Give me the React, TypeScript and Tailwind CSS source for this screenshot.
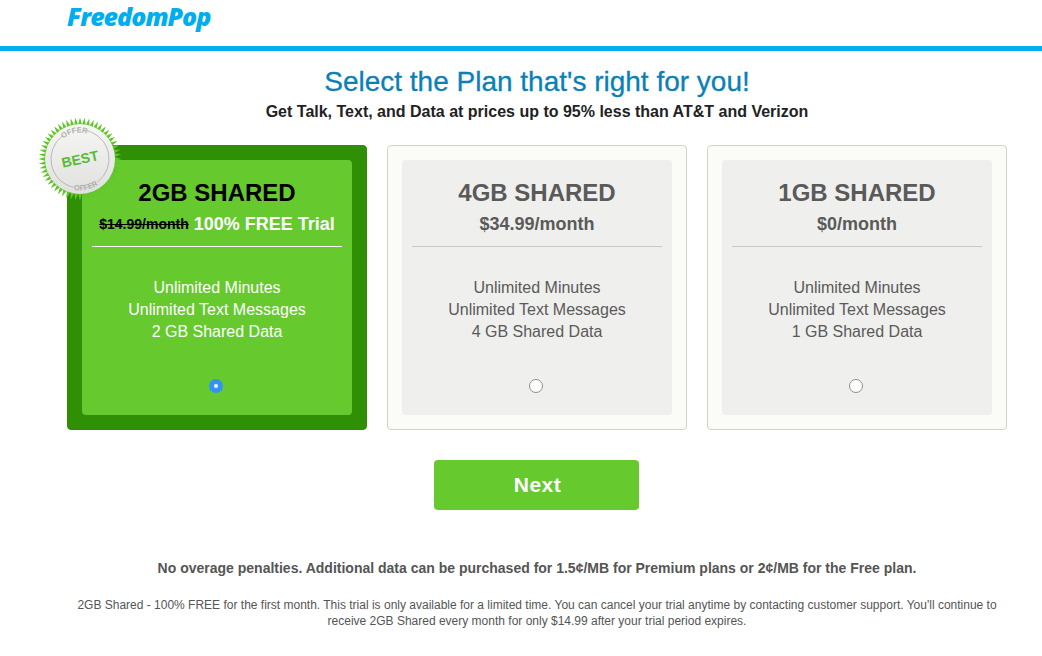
const plans = [
  {
    id: "2gb",
    name: "2GB SHARED",
    price: "$14.99/month",
    trial: "100% FREE Trial",
    data: "2 GB Shared Data",
    selected: true,
  },
  { id: "4gb", name: "4GB SHARED", price: "$34.99/month", data: "4 GB Shared Data" },
  { id: "1gb", name: "1GB SHARED", price: "$0/month", data: "1 GB Shared Data" },
];

function starburst() {
  const pts: string[] = [];
  const n = 56;
  for (let i = 0; i < n * 2; i++) {
    const r = i % 2 === 0 ? 41.5 : 34.5;
    const a = (Math.PI * i) / n;
    pts.push(`${(45 + r * Math.cos(a)).toFixed(2)},${(45 + r * Math.sin(a)).toFixed(2)}`);
  }
  return pts.join(" ");
}

function BestBadge() {
  return (
    <svg
      width="90"
      height="90"
      viewBox="0 0 90 90"
      className="absolute left-[-33.5px] top-[-32px]"
      style={{ fontFamily: "'Liberation Sans', Arial, sans-serif" }}
    >
      <defs>
        <linearGradient id="disc" x1="0" y1="0" x2="0" y2="1">
          <stop offset="0" stopColor="#f6f6f4" />
          <stop offset="1" stopColor="#e0e0de" />
        </linearGradient>
        <path id="arc-top" d="M 27.97 24.7 A 26.5 26.5 0 0 1 62.03 24.7" fill="none" />
        <path id="arc-bottom" d="M 24.75 69.13 A 31.5 31.5 0 0 0 65.25 69.13" fill="none" />
      </defs>
      <polygon points={starburst()} fill="#62c52c" />
      <circle cx="45" cy="45" r="35" fill="url(#disc)" />
      <g transform="rotate(-12 45 45)">
        <path d="M 32.74 18.7 A 29 29 0 0 0 32.74 71.3" fill="none" stroke="#a9a9a7" strokeWidth="0.7" />
        <path d="M 57.26 18.7 A 29 29 0 0 1 57.26 71.3" fill="none" stroke="#a9a9a7" strokeWidth="0.7" />
        <text fill="#aeaeac" fontSize="7.5" fontWeight="700">
          <textPath href="#arc-top" startOffset="50%" textAnchor="middle">
            OFFER
          </textPath>
        </text>
        <text fill="#aeaeac" fontSize="7.5" fontWeight="700">
          <textPath href="#arc-bottom" startOffset="50%" textAnchor="middle">
            OFFER
          </textPath>
        </text>
        <text x="45" y="50" textAnchor="middle" fill="#58bb33" fontSize="14" fontWeight="700">
          BEST
        </text>
      </g>
    </svg>
  );
}

function Radio({ checked }: { checked?: boolean }) {
  if (checked) {
    return (
      <span className="flex h-[14px] w-[14px] items-center justify-center rounded-full bg-[#3393f5]">
        <span className="h-[4px] w-[4px] rounded-full bg-white" />
      </span>
    );
  }
  return <span className="block h-[14px] w-[14px] rounded-full border border-[#8e8e8e] bg-white" />;
}

function PlanCard({ plan }: { plan: (typeof plans)[number] }) {
  const on = plan.selected;
  return (
    <div
      className={`relative h-[285px] w-[300px] rounded-[4px] border p-[14px] ${
        on ? "border-[#2d8e04] bg-[#2f8f05]" : "border-[#d2d2cc] bg-[#fbfbf7]"
      }`}
    >
      {on && <BestBadge />}
      <div
        className={`flex h-[255px] flex-col items-center rounded-[4px] px-[10px] pt-[19px] ${
          on ? "bg-[#66c92e] text-white" : "bg-[#efefed] text-[#5a5a5a]"
        }`}
      >
        <h2 className={`text-[24px] font-bold leading-[28px] ${on ? "text-black" : ""}`}>{plan.name}</h2>
        <p className="mt-[4px] flex h-[26px] items-center whitespace-nowrap text-[18px] font-bold leading-[26px]">
          <span className={on ? "text-[14px] text-black line-through" : ""}>{plan.price}</span>
          {plan.trial && <span className="ml-[5px] text-[18px] text-white">{plan.trial}</span>}
        </p>
        <div className={`mt-[9px] h-px w-full ${on ? "bg-white" : "bg-[#c9c9c7]"}`} />
        <div className="mt-[30px] text-center text-[16px] leading-[22px]">
          <p>Unlimited Minutes</p>
          <p>Unlimited Text Messages</p>
          <p>{plan.data}</p>
        </div>
        <div className="mr-[2px] mt-[36px]">
          <Radio checked={on} />
        </div>
      </div>
    </div>
  );
}

export default function App() {
  return (
    <div className="h-[656px] w-[1042px] overflow-hidden bg-white font-['Liberation_Sans',Arial,sans-serif]">
      <header className="h-[51px] border-b-[5px] border-[#00aeef] pl-[67px]">
        <span className="block font-['Open_Sans',sans-serif] text-[25px] font-extrabold italic leading-[32px] tracking-[-1px] text-[#00aeef]">
          FreedomPop
        </span>
      </header>

      <main className="ml-[67px] w-[940px]">
        <h1 className="mt-[13px] text-center text-[28px] leading-[36px] text-[#0b7fb8] [-webkit-text-stroke:0.3px_#0b7fb8]">
          Select the Plan that's right for you!
        </h1>
        <p className="mt-[1px] text-center text-[16px] font-bold leading-[22px] text-[#222]">
          Get Talk, Text, and Data at prices up to 95% less than AT&amp;T and Verizon
        </p>

        <div className="mt-[22px] flex gap-[20px]">
          {plans.map((plan) => (
            <PlanCard key={plan.id} plan={plan} />
          ))}
        </div>

        <div className="mt-[30px] flex justify-center pr-[1px]">
          <button
            type="button"
            className="h-[50px] w-[205px] rounded-[4px] bg-[#66c92e] pl-[2px] text-[21px] font-bold tracking-[0.5px] text-white"
          >
            Next
          </button>
        </div>

        <p className="mt-[48px] text-center text-[14px] font-bold leading-[20px] text-[#555]">
          No overage penalties. Additional data can be purchased for 1.5¢/MB for Premium plans or 2¢/MB for the Free plan.
        </p>
        <p className="mx-auto mt-[19px] w-[930px] text-center text-[12px] leading-[16px] text-[#555]">
          2GB Shared - 100% FREE for the first month. This trial is only available for a limited time. You can cancel your trial anytime by contacting customer support. You'll continue to receive 2GB Shared every month for only $14.99 after your trial period expires.
        </p>
      </main>
    </div>
  );
}
